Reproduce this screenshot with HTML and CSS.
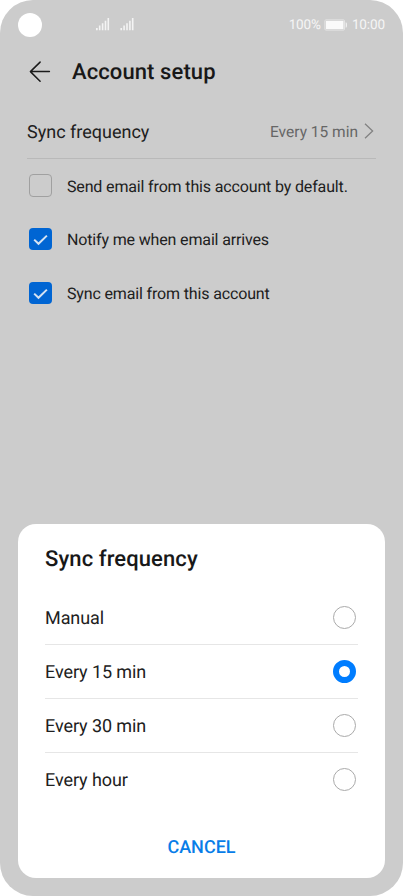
FILE: index.html
```html
<!DOCTYPE html>
<html lang="en">
<head>
<meta charset="utf-8">
<title>Account setup</title>
<link rel="stylesheet" href="styles.css">
</head>
<body>
<div class="phone">
  <div class="status">
    <span class="camera"></span>
    <svg class="signals" width="40" height="14" viewBox="0 0 40 14" fill="#f4f4f4">
      <path id="bars" d="M1 10h1.7v2.2H1zM3.9 7.6h1.6v4.6H3.9zM6.8 5.2h1.6v7H6.8zM9.7 2.8h1.6v9.4H9.7zM12.5 0h1.6v12.2h-1.6z"/>
      <use href="#bars" x="24.4"/>
    </svg>
    <span class="status-text percent">100%</span>
    <svg class="battery" width="24" height="12" viewBox="0 0 24 12">
      <rect x=".9" y=".9" width="19.6" height="10.2" rx="1" fill="none" stroke="#e6e6e6" stroke-width=".9"/>
      <rect x="1.9" y="1.9" width="17.6" height="8.2" fill="#fafafa"/>
      <path d="M21.7 3.2c1 .2 1.3.8 1.3 2.8s-.3 2.6-1.3 2.8z" fill="#f0f0f0"/>
    </svg>
    <span class="status-text">10:00</span>
  </div>
  <header class="header">
    <svg width="22" height="22" viewBox="0 0 22 22" fill="none" stroke="#1a1a1a" stroke-width="1.5" stroke-linecap="round" stroke-linejoin="round"><path d="M20.4 10.6H1.4M11.1 1.1L1.4 10.6l9.7 9.6"/></svg>
    <h1 class="title">Account setup</h1>
  </header>
  <div class="setting">
    <span class="setting-name">Sync frequency</span>
    <span class="setting-value">Every 15 min</span>
    <svg class="chevron" width="10" height="16" viewBox="0 0 10 16" fill="none" stroke="#828282" stroke-width="1.3"><path d="M1 .8L8.6 8 1 15.2"/></svg>
  </div>
  <div class="checks">
    <div class="check"><span class="box"></span><span class="label">Send email from this account by default.</span></div>
    <div class="check"><span class="box on"><svg width="23" height="23" viewBox="0 0 23 23"><path d="M5.2 11.6l4.3 4.2 8.4-8.2"/></svg></span><span class="label">Notify me when email arrives</span></div>
    <div class="check"><span class="box on"><svg width="23" height="23" viewBox="0 0 23 23"><path d="M5.2 11.6l4.3 4.2 8.4-8.2"/></svg></span><span class="label">Sync email from this account</span></div>
  </div>
  <section class="dialog">
    <h2 class="dialog-title">Sync frequency</h2>
    <div class="option"><span class="label">Manual</span><span class="radio"></span></div>
    <div class="option"><span class="label">Every 15 min</span><span class="radio selected"></span></div>
    <div class="option"><span class="label">Every 30 min</span><span class="radio"></span></div>
    <div class="option last"><span class="label">Every hour</span><span class="radio"></span></div>
    <div class="cancel">CANCEL</div>
  </section>
</div>
</body>
</html>
```
FILE: styles.css
```css
* { box-sizing: border-box; }
body { margin: 0; background: #fff; font-family: Roboto, sans-serif; color: #202020; text-rendering: geometricPrecision; }
.phone {
  width: 403px; height: 896px; border-radius: 33px; background: #ccc;
  display: flex; flex-direction: column; overflow: hidden; white-space: nowrap;
}
.status { height: 50px; flex: none; display: flex; align-items: center; padding: 0 18px; }
.camera { width: 24px; height: 24px; border-radius: 50%; background: #fff; }
.signals { margin-left: 53px; margin-top: -1px; }
.status-text { font-size: 13.5px; line-height: 16px; letter-spacing: -0.1px; color: #f5f5f5; }
.percent { margin-left: auto; }
.battery { margin: -1px 4px 0 3px; }
.header { height: 44px; flex: none; display: flex; align-items: center; padding-left: 29px; }
.title, .dialog-title { margin: 0; font-size: 22px; font-weight: 500; line-height: 28px; letter-spacing: 0.1px; color: #181818; }
.title { margin-left: 21px; padding-top: 2px; }
.setting {
  height: 54px; flex: none; margin: 11px 27px 0; display: flex; align-items: center;
  border-bottom: 1px solid #b9b9b9;
}
.setting-name { font-size: 18px; padding-top: 2px; }
.setting-value { margin-left: auto; font-size: 15.5px; color: #666; }
.chevron { margin: -1px 2px 0 6px; }
.checks { padding: 0 29px; margin-top: -0.6px; }
.check { height: 53.8px; display: flex; align-items: center; gap: 15.3px; font-size: 16px; letter-spacing: -0.15px; }
.label { padding-top: 1.6px; }
.box { width: 22.7px; height: 22.7px; border: 1.4px solid #a0a0a0; border-radius: 4px; }
.box.on { border: 0; background: #0065d3; }
.box svg { display: block; fill: none; stroke: #d4e2f2; stroke-width: 2; }
.dialog {
  width: 367px; height: 354px; margin: auto auto 18px; padding: 22px 27px 0;
  border-radius: 18px; background: #fff;
}
.dialog-title { margin-bottom: 17px; }
.option {
  height: 54px; display: flex; align-items: center; justify-content: space-between;
  padding-right: 2px; font-size: 18px; letter-spacing: -0.08px; border-bottom: 1px solid #e6e6e6;
}
.option.last { border-bottom-color: transparent; }
.radio { width: 23px; height: 23px; border: 1px solid #aaa; border-radius: 50%; }
.radio.selected { border: 6px solid #007dff; }
.cancel { margin-top: 29px; text-align: center; font-size: 18px; font-weight: 500; line-height: 24px; color: #087de8; }
```
